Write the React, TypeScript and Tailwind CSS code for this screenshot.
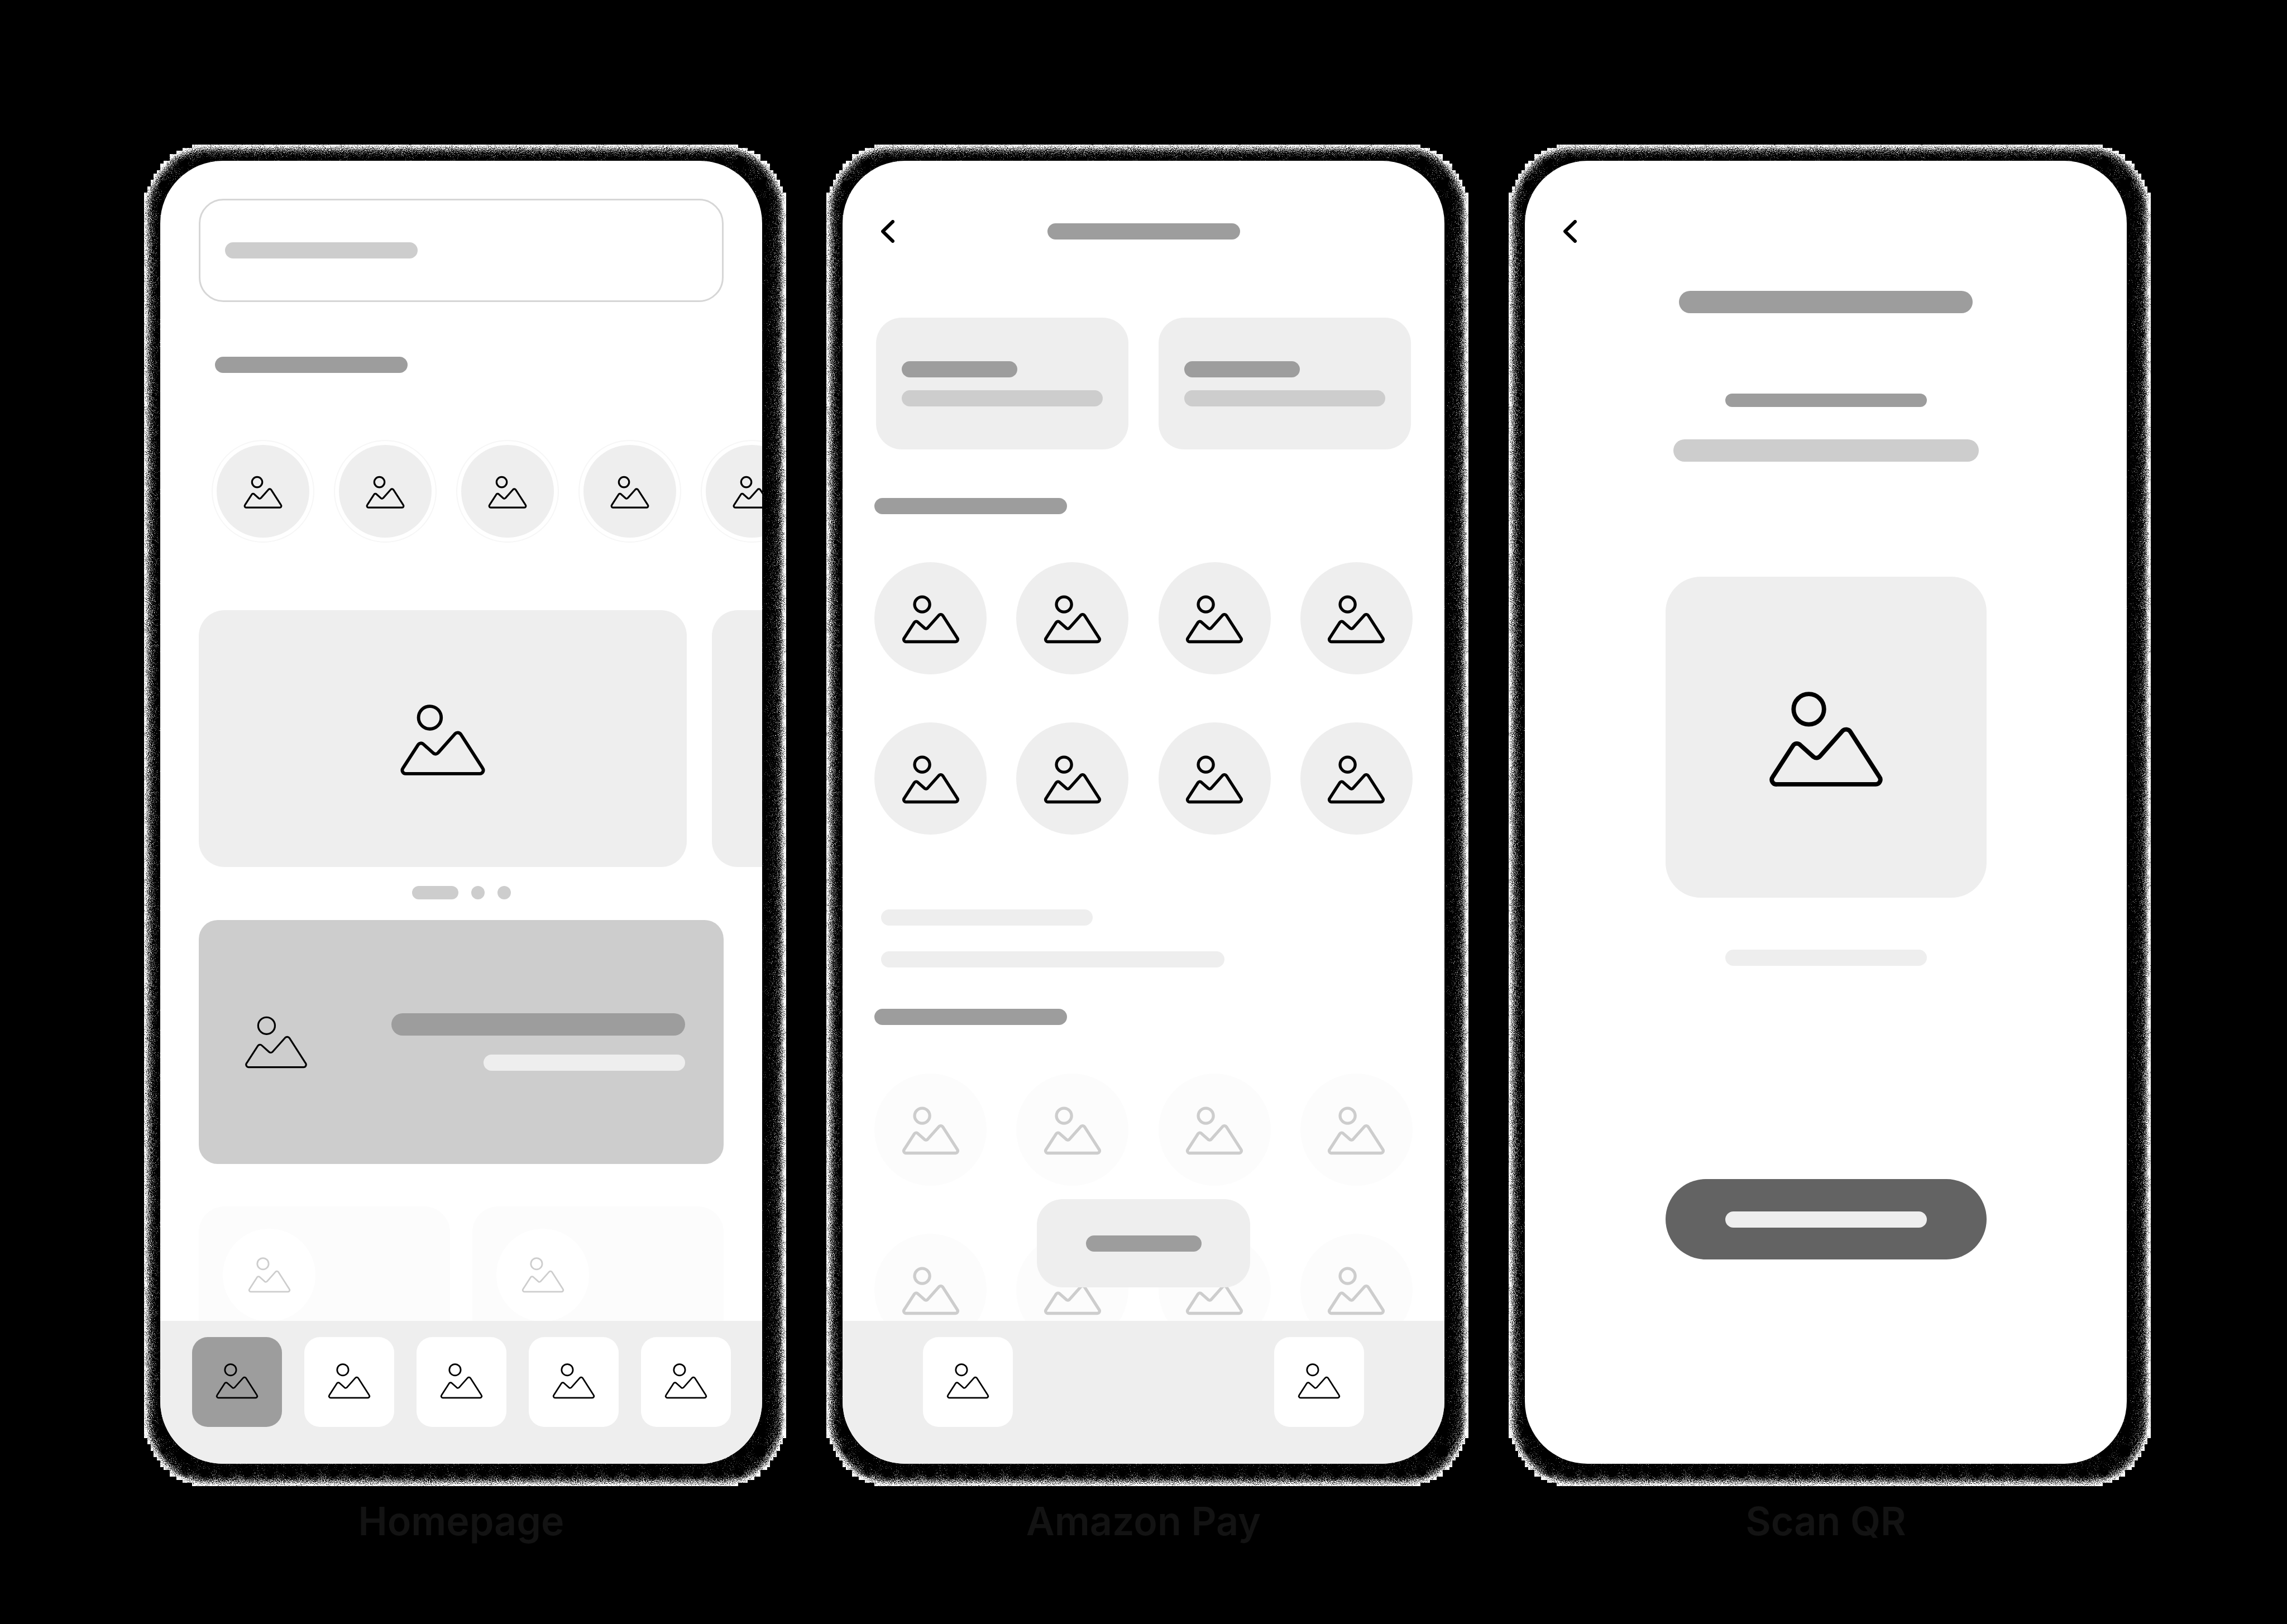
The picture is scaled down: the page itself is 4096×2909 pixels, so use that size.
import React from "react";
import type { ReactNode } from "react";

const iconStroke = {
  fine: 14,
  nav: 18,
  card: 19,
  small: 23,
  bold: 26,
};

function PictureIcon({ className, weight }: { className: string; weight: keyof typeof iconStroke }) {
  return (
    <svg
      viewBox="537 558 487 412"
      className={className}
      fill="none"
      stroke="currentColor"
      strokeWidth={iconStroke[weight]}
      strokeLinejoin="round"
      overflow="visible"
      aria-hidden="true"
    >
      <circle cx="705.5" cy="634" r="66" />
      <path d="M567 960H995A20 20 0 0 0 1012 928L886 732A22 22 0 0 0 852 728L754 838A20 20 0 0 1 726 841L668 789A20 20 0 0 0 637 792L549 928A20 20 0 0 0 567 960Z" />
    </svg>
  );
}

function BackButton() {
  return (
    <button type="button" aria-label="Back" className="h-[41px] w-6">
      <svg viewBox="0 0 24 41" className="h-full w-full" fill="none" stroke="black" strokeWidth="6" strokeLinecap="round" strokeLinejoin="round" aria-hidden="true">
        <path d="M21 3L3 20.500L21 38" />
      </svg>
    </button>
  );
}

function Bar({ className }: { className: string }) {
  return <div className={`shrink-0 rounded-full ${className}`} />;
}

// Corner of the glow outline, in 8-unit blocks: inset of each row from the side.
const steps = [15, 12, 10, 8, 8, 6, 5, 5, 4, 3, 3, 2, 2, 1, 1, 0];
const glowW = 1600;
const glowH = 3344;

function glowPath() {
  const left: string[] = [];
  steps.forEach((s, i) => {
    left.push(`${s * 8},${i * 8}`, `${s * 8},${(i + 1) * 8}`);
  });
  const at = (fx: boolean, fy: boolean) =>
    left.map((p) => {
      const [x, y] = p.split(",").map(Number);
      return `${fx ? glowW - x : x},${fy ? glowH - y : y}`;
    });
  return [
    ...at(false, false).reverse(),
    ...at(true, false),
    ...at(true, true).reverse(),
    ...at(false, true),
  ].join(" ");
}

function Glow() {
  return (
    <div className="pointer-events-none absolute -top-[29px] -right-[43px] -bottom-[40px] -left-[29px]">
      <svg viewBox="0 0 1600 3344" preserveAspectRatio="none" className="h-full w-full" aria-hidden="true">
        <polygon points={glowPath()} fill="black" filter="url(#grain)" shapeRendering="crispEdges" />
      </svg>
    </div>
  );
}

function GrainFilter() {
  return (
    <svg width="0" height="0" className="absolute" aria-hidden="true">
      <filter id="grain" x="-5%" y="-5%" width="110%" height="110%" colorInterpolationFilters="sRGB">
        <feTurbulence type="fractalNoise" baseFrequency="0.7" numOctaves="2" seed="4" result="raw" />
        <feColorMatrix in="raw" type="matrix" values="1 0 0 0 0  1 0 0 0 0  1 0 0 0 0  0 0 0 0 1" result="noise" />
        <feGaussianBlur in="SourceAlpha" stdDeviation="20" result="soft" />
        <feColorMatrix in="soft" type="matrix" values="0 0 0 1 0  0 0 0 1 0  0 0 0 1 0  0 0 0 0 1" result="ramp" />
        <feComposite in="noise" in2="ramp" operator="arithmetic" k1="0" k2="5" k3="-5" k4="1.6" result="mix" />
        <feComposite in="mix" in2="SourceAlpha" operator="in" />
      </filter>
    </svg>
  );
}

function Phone({ title, children }: { title: string; children: ReactNode }) {
  return (
    <section className="flex min-w-0 flex-col items-center">
      <div className="relative w-full">
        <Glow />
        <div className="relative flex aspect-[1500/3248] w-full flex-col overflow-hidden rounded-[112px] bg-white">
          {children}
        </div>
      </div>
      <h2 className="relative mt-[67px] font-['Inter',sans-serif] text-[70px] leading-[72px] font-semibold text-[#131313]">{title}</h2>
    </section>
  );
}

function NavButton({ label, active = false }: { label: string; active?: boolean }) {
  return (
    <button
      type="button"
      aria-label={label}
      className={`flex size-[161px] items-center justify-center rounded-[28px] pb-1 ${active ? "bg-[#9d9d9d]" : "bg-white"}`}
    >
      <PictureIcon className="w-[75px]" weight="nav" />
    </button>
  );
}

function Homepage() {
  return (
    <Phone title="Homepage">
      <div className="min-h-0 flex-1 overflow-hidden px-[69px] pt-[68px]">
        <div className="flex h-[185px] items-center rounded-[44px] border-[3px] border-[#d6d6d6] px-11">
          <Bar className="h-[29px] w-[345px] bg-[#cdcdcd]" />
          <input type="search" aria-label="Search" className="h-full min-w-0 flex-1 bg-transparent outline-none" />
        </div>
        <Bar className="mt-[98px] ml-[29px] h-[29px] w-[345px] bg-[#9d9d9d]" />
        <div className="mt-[120px] -mr-[69px] ml-[23px] flex gap-[35px] overflow-hidden">
          {["One", "Two", "Three", "Four", "Five"].map((n) => (
            <button key={n} type="button" aria-label={`Shortcut ${n}`} className="flex size-[184px] shrink-0 items-center justify-center rounded-full border-2 border-[#f6f6f6]">
              <span className="flex size-[166px] items-center justify-center rounded-full bg-[#eeeeee] pt-1">
                <PictureIcon className="w-[68px]" weight="small" />
              </span>
            </button>
          ))}
        </div>
        <div className="mt-[121px] -mr-[69px] flex gap-[45px] overflow-hidden">
          <div className="flex h-[460px] w-[874px] shrink-0 items-center justify-center rounded-[46px] bg-[#eeeeee] pt-1">
            <PictureIcon className="w-[150px]" weight="card" />
          </div>
          <div className="h-[460px] w-[874px] shrink-0 rounded-[46px] bg-[#eeeeee]" />
        </div>
        <div className="mt-[34px] flex justify-center gap-[23px]">
          <Bar className="h-6 w-[83px] bg-[#cdcdcd]" />
          <Bar className="size-6 bg-[#cdcdcd]" />
          <Bar className="size-6 bg-[#cdcdcd]" />
        </div>
        <div className="mt-[37px] flex h-[437px] items-center justify-between rounded-[34px] bg-[#cdcdcd] pr-[69px] pl-[83px]">
          <PictureIcon className="w-[111px]" weight="fine" />
          <div className="flex flex-col items-end gap-[34px]">
            <Bar className="h-10 w-[526px] bg-[#9d9d9d]" />
            <Bar className="h-[29px] w-[361px] bg-[#eeeeee]" />
          </div>
        </div>
        <div className="mt-[76px] grid grid-cols-2 gap-10">
          {[0, 1].map((i) => (
            <div key={i} className="h-[460px] rounded-[46px] bg-[#fcfcfc] pt-10 pl-[43px]">
              <div className="flex size-[166px] items-center justify-center rounded-full bg-white text-[#cdcdcd]">
                <PictureIcon className="w-[75px]" weight="nav" />
              </div>
            </div>
          ))}
        </div>
      </div>
      <nav className="flex h-[256px] shrink-0 justify-center gap-10 bg-[#eeeeee] pt-[29px]">
        <NavButton label="Home" active />
        <NavButton label="Profile" />
        <NavButton label="Wallet" />
        <NavButton label="Cart" />
        <NavButton label="Menu" />
      </nav>
    </Phone>
  );
}

function CircleGrid({ faded = false }: { faded?: boolean }) {
  return (
    <div className="grid grid-cols-[repeat(4,201px)] justify-between gap-y-[86px]">
      {Array.from({ length: 8 }, (_, i) => (
        <button
          key={i}
          type="button"
          aria-label={`Service ${i + 1}`}
          className={`flex size-[201px] items-center justify-center rounded-full pt-1 ${faded ? "bg-[#fcfcfc] text-[#cdcdcd]" : "bg-[#eeeeee]"}`}
        >
          <PictureIcon className="w-[100px]" weight="bold" />
        </button>
      ))}
    </div>
  );
}

function AmazonPay() {
  return (
    <Phone title="Amazon Pay">
      <div className="relative min-h-0 flex-1 overflow-hidden px-[57px] pt-[106px]">
        <header className="grid grid-cols-[1fr_auto_1fr] items-center px-3">
          <BackButton />
          <Bar className="h-[29px] w-[345px] bg-[#9d9d9d]" />
        </header>
        <div className="mt-[134px] grid grid-cols-2 gap-[54px] px-[3px]">
          {[0, 1].map((i) => (
            <div key={i} className="flex h-[236px] flex-col justify-center gap-[23px] rounded-[46px] bg-[#eeeeee] pl-[46px]">
              <Bar className="h-[29px] w-[207px] bg-[#9d9d9d]" />
              <Bar className="h-[29px] w-[360px] bg-[#cdcdcd]" />
            </div>
          ))}
        </div>
        <Bar className="mt-[87px] mb-[86px] h-[29px] w-[345px] bg-[#9d9d9d]" />
        <CircleGrid />
        <Bar className="mt-[134px] ml-3 h-[29px] w-[379px] bg-[#eeeeee]" />
        <Bar className="mt-[46px] ml-3 h-[29px] w-[615px] bg-[#eeeeee]" />
        <Bar className="mt-[74px] mb-[87px] h-[29px] w-[345px] bg-[#9d9d9d]" />
        <CircleGrid faded />
        <button type="button" aria-label="Continue" className="absolute bottom-[60px] left-1/2 flex h-[158px] w-[382px] -translate-x-1/2 items-center justify-center rounded-[46px] bg-[#eeeeee]">
          <Bar className="h-[29px] w-[207px] bg-[#9d9d9d]" />
        </button>
      </div>
      <nav className="flex h-[256px] shrink-0 justify-between bg-[#eeeeee] px-36 pt-[29px]">
        <NavButton label="Home" />
        <NavButton label="Scan" />
      </nav>
    </Phone>
  );
}

function ScanQr() {
  return (
    <Phone title="Scan QR">
      <div className="flex flex-1 flex-col items-center pt-[106px]">
        <header className="flex w-full px-[69px]">
          <BackButton />
        </header>
        <Bar className="mt-[86px] h-10 w-[526px] bg-[#9d9d9d]" />
        <Bar className="mt-[144px] h-6 w-[361px] bg-[#9d9d9d]" />
        <Bar className="mt-[58px] h-10 w-[547px] bg-[#cdcdcd]" />
        <div className="mt-[206px] flex size-[575px] items-center justify-center rounded-[63px] bg-[#eeeeee] pt-2">
          <PictureIcon className="w-[201px]" weight="card" />
        </div>
        <Bar className="mt-[93px] h-[29px] w-[361px] bg-[#eeeeee]" />
        <button type="button" aria-label="Scan" className="mt-[382px] flex h-36 w-[575px] items-center justify-center rounded-full bg-[#636363]">
          <Bar className="h-[29px] w-[361px] bg-[#eeeeee]" />
        </button>
      </div>
    </Phone>
  );
}

export default function App() {
  return (
    <main className="min-h-screen bg-black px-[287px] pt-72 pb-[84px] text-black">
      <GrainFilter />
      <div className="grid grid-cols-3 gap-36">
        <Homepage />
        <AmazonPay />
        <ScanQr />
      </div>
    </main>
  );
}
